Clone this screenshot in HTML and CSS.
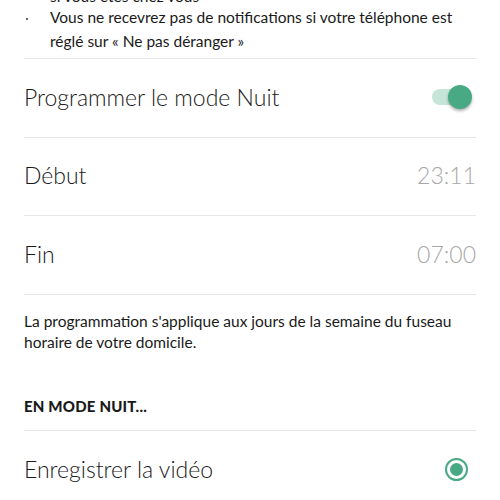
FILE: index.html
```html
<!DOCTYPE html>
<html lang="fr">
<head>
    <meta charset="UTF-8">
    <meta name="viewport" content="width=device-width, initial-scale=1.0">
    <title>Mode Nuit</title>
    <link rel="stylesheet" href="styles.css">
</head>
<body>
    <div class="page">
        <ul class="notes">
            <li class="no-dot">si vous êtes chez vous</li>
            <li>Vous ne recevrez pas de notifications si votre téléphone est réglé sur « Ne pas déranger »</li>
        </ul>

        <div class="row">
            <span class="row-label">Programmer le mode Nuit</span>
            <span class="toggle on"><span class="knob"></span></span>
        </div>
        <div class="row">
            <span class="row-label">Début</span>
            <span class="row-value">23:11</span>
        </div>
        <div class="row">
            <span class="row-label">Fin</span>
            <span class="row-value">07:00</span>
        </div>

        <p class="hint">La programmation s'applique aux jours de la semaine du fuseau horaire de votre domicile.</p>

        <h4 class="section-title">EN MODE NUIT...</h4>

        <div class="row">
            <span class="row-label">Enregistrer la vidéo</span>
            <span class="radio checked"></span>
        </div>
    </div>
</body>
</html>
```

FILE: styles.css
```css
body {
    margin: 0;
    background: #fff;
    color: #1a1a1a;
    font-family: Lato, "Open Sans", sans-serif;
    overflow: hidden;
}
.page {
    padding: 0 24px;
}
.notes {
    margin: -13px 0 0 0;
    padding: 0 0 5px 26px;
    font-size: 15.5px;
    line-height: 24px;
    font-weight: 400;
    border-bottom: 1px solid #e8e8e8;
}
.notes li {
    list-style: none;
    position: relative;
}
.notes li::before {
    content: "";
    position: absolute;
    left: -24px;
    top: 13px;
    width: 2px;
    height: 2px;
    background: #333;
    border-radius: 50%;
}
.notes li.no-dot {
    line-height: 18px;
}
.notes li.no-dot::before {
    display: none;
}
.row {
    height: 77.6px;
    display: flex;
    align-items: center;
    justify-content: space-between;
    border-bottom: 1px solid #e8e8e8;
}
.row-label {
    font-size: 23px;
    font-weight: 300;
    margin-top: -2px;
}
.row-value {
    font-size: 23px;
    font-weight: 300;
    color: #a8a8a8;
    margin-top: -2px;
}
.toggle {
    position: relative;
    width: 36px;
    height: 16px;
    border-radius: 8px;
    background: #c4e5d7;
    margin-right: 8px;
    margin-top: -2px;
}
.toggle .knob {
    position: absolute;
    right: -4px;
    top: -4px;
    width: 24px;
    height: 24px;
    border-radius: 50%;
    background: #48a985;
    box-shadow: 0 2px 3px rgba(0, 0, 0, 0.3);
}
.radio {
    width: 19px;
    height: 19px;
    border: 2.5px solid #48a985;
    border-radius: 50%;
    margin-right: 8px;
    position: relative;
}
.radio.checked::after {
    content: "";
    position: absolute;
    left: 3px;
    top: 3px;
    width: 13px;
    height: 13px;
    border-radius: 50%;
    background: #48a985;
}
.hint {
    margin: 0;
    padding: 16px 0 0 0;
    font-size: 15.5px;
    line-height: 21px;
}
.section-title {
    margin: 0;
    font-size: 15px;
    font-weight: 900;
    letter-spacing: 0.2px;
    line-height: 24px;
    padding: 41px 0 12px 0;
    border-bottom: 1px solid #e8e8e8;
}
```
